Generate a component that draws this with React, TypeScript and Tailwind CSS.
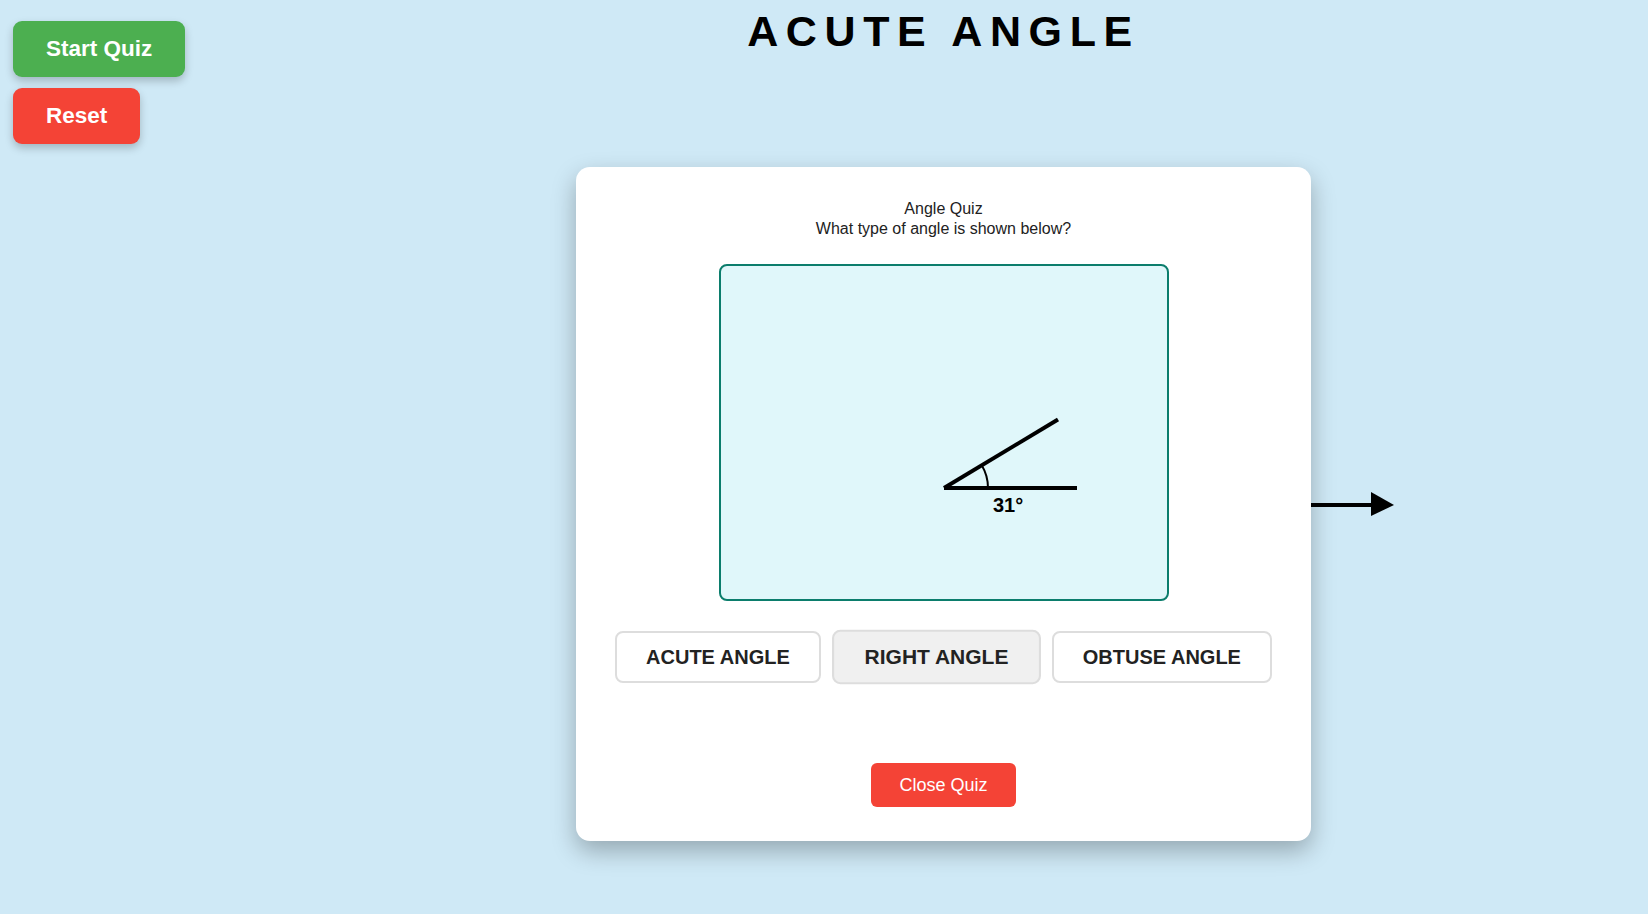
import { useState } from 'react';

const OPTIONS = ['Acute Angle', 'Right Angle', 'Obtuse Angle'];

function AngleCanvas({ deg }: { deg: number }) {
  const vx = 223;
  const vy = 222;
  const len = 133;
  const r = 44;
  const rad = (deg * Math.PI) / 180;
  const ex = vx + len * Math.cos(rad);
  const ey = vy - len * Math.sin(rad);
  const ax = vx + r * Math.cos(rad);
  const ay = vy - r * Math.sin(rad);

  return (
    <div className="w-[450px] h-[337px] rounded-[8px] border-2 border-[#0b7d6c] bg-[#e0f7fa] overflow-hidden">
      <svg width="446" height="333" viewBox="0 0 446 333">
        <line x1={vx} y1={vy} x2={vx + len} y2={vy} stroke="#000" strokeWidth="4" />
        <line x1={vx} y1={vy} x2={ex} y2={ey} stroke="#000" strokeWidth="4" />
        <path d={`M ${vx + r} ${vy} A ${r} ${r} 0 0 0 ${ax} ${ay}`} fill="none" stroke="#000" strokeWidth="2" />
        <text
          x={vx + 64}
          y={vy + 24}
          textAnchor="middle"
          fontFamily="'Liberation Sans', Arial, sans-serif"
          fontWeight="bold"
          fontSize="20"
          fill="#000"
        >
          {deg}°
        </text>
      </svg>
    </div>
  );
}

export default function App() {
  const [hover] = useState('Right Angle');

  return (
    <div className="min-h-[914px] w-full bg-[#cfe9f6] flex font-['Liberation_Sans',Arial,sans-serif]">
      <div className="w-[239px] shrink-0 pl-[13px] pt-[21px] flex flex-col items-start gap-[11px]">
        <button className="h-[56px] px-[33px] rounded-[9px] bg-[#4caf50] text-white text-[22.5px] font-bold shadow-[0_4px_8px_rgba(0,0,0,0.22)]">
          Start Quiz
        </button>
        <button className="h-[56px] px-[33px] rounded-[9px] bg-[#f44336] text-white text-[22.5px] font-bold shadow-[0_4px_8px_rgba(0,0,0,0.22)]">
          Reset
        </button>
      </div>

      <div className="flex-1 flex flex-col items-center">
        <h1 className="mt-[7px] text-[43px] leading-[49px] font-bold tracking-[7.6px] text-black">
          ACUTE ANGLE
        </h1>

        <div className="relative mt-[111px] w-[735px] h-[674px] bg-white rounded-[14px] shadow-[0_10px_24px_rgba(0,0,0,0.28)] flex flex-col items-center pt-[32px]">
          <div className="text-[16px] leading-[20px] text-[#222] text-center">
            <div>Angle Quiz</div>
            <div>What type of angle is shown below?</div>
          </div>

          <div className="mt-[25px]">
            <AngleCanvas deg={31} />
          </div>

          <div className="mt-[30px] flex items-center gap-4">
            {OPTIONS.map(o => (
              <button
                key={o}
                className={
                  o === hover
                    ? 'h-[52px] px-[29px] rounded-[8px] border-2 border-[#dddddd] bg-[#f0f0f0] text-[#222] text-[20px] font-bold uppercase scale-[1.05]'
                    : 'h-[52px] px-[29px] rounded-[8px] border-2 border-[#dddddd] bg-white text-[#222] text-[20px] font-bold uppercase'
                }
              >
                {o}
              </button>
            ))}
          </div>

          <button className="mt-[80px] h-[44px] px-[28px] rounded-[6px] bg-[#f44336] text-white text-[18px]">
            Close Quiz
          </button>

          <svg className="absolute left-full top-[324px]" width="90" height="26" viewBox="0 0 90 26">
            <line x1="0" y1="14" x2="64" y2="14" stroke="#000" strokeWidth="4" />
            <polygon points="60,1 83,14 60,25" fill="#000" />
          </svg>
        </div>
      </div>
    </div>
  );
}
